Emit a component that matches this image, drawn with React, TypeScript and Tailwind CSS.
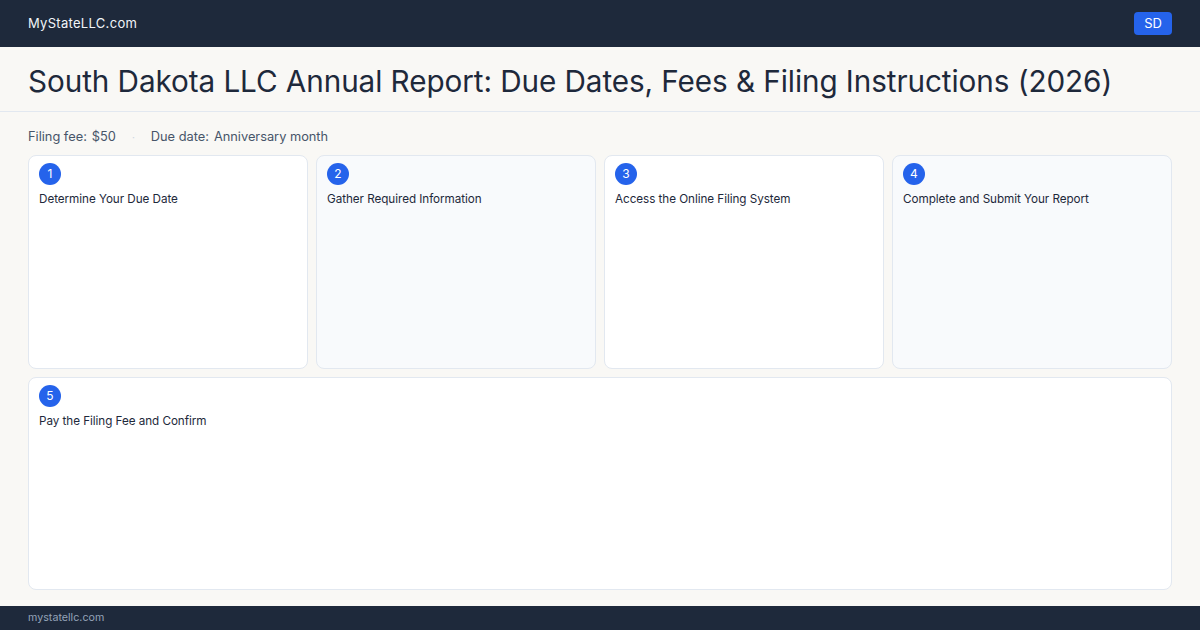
import React from "react";

const steps = [
  "Determine Your Due Date",
  "Gather Required Information",
  "Access the Online Filing System",
  "Complete and Submit Your Report",
  "Pay the Filing Fee and Confirm",
];

function StepCard({ n, title, shaded, wide }: { n: number; title: string; shaded: boolean; wide?: boolean }) {
  return (
    <div
      className={`rounded-lg border border-[#e2e8f0] px-[10px] pt-[7px] ${shaded ? "bg-[#f8fafc]" : "bg-white"} ${wide ? "col-span-4" : ""}`}
    >
      <div className="w-[22px] h-[22px] rounded-full bg-[#2563eb] text-white text-[12px] flex items-center justify-center">
        {n}
      </div>
      <div className="mt-[5px] text-[11.7px] text-[#1e293b] leading-[18px] tracking-[-0.05px]">{title}</div>
    </div>
  );
}

export default function App() {
  return (
    <div className="w-[1200px] h-[630px] flex flex-col bg-[#f9f8f5] font-['Inter',sans-serif] overflow-hidden">
      {/* top bar */}
      <div className="h-[47px] bg-[#1e293b] px-7 flex items-center justify-between shrink-0">
        <span className="text-[13px] text-[#f1f5f9] tracking-[0.3px]">MyStateLLC.com</span>
        <span className="h-[23px] px-[10px] rounded bg-[#2563eb] text-white text-[13px] flex items-center">SD</span>
      </div>

      {/* title */}
      <div className="h-[65px] border-b border-[#e2e8f0] px-7 pt-[5px] flex items-center shrink-0">
        <h1 className="text-[29.7px] text-[#1e293b] leading-none tracking-[-0.08px]">
          South Dakota LLC Annual Report: Due Dates, Fees &amp; Filing Instructions (2026)
        </h1>
      </div>

      {/* body */}
      <div className="flex-1 flex flex-col px-7 pt-4 pb-4 min-h-0">
        <div className="h-[18px] mb-[9px] flex items-center text-[12.8px] text-[#475569] shrink-0">
          <span className="flex gap-[5px]">
            <span>Filing fee:</span>
            <span>$50</span>
          </span>
          <span className="mx-[16px] text-[#cbd5e1] text-[10px]">·</span>
          <span className="flex gap-[5px]">
            <span>Due date:</span>
            <span>Anniversary month</span>
          </span>
        </div>
        <div className="flex-1 grid grid-cols-4 grid-rows-2 gap-2 min-h-0">
          {steps.map((s, i) => (
            <StepCard key={s} n={i + 1} title={s} shaded={i % 2 === 1} wide={i === 4} />
          ))}
        </div>
      </div>

      {/* footer */}
      <div className="h-[24px] bg-[#1e293b] px-7 flex items-center shrink-0">
        <span className="text-[10.7px] text-[#94a3b8]">mystatellc.com</span>
      </div>
    </div>
  );
}
